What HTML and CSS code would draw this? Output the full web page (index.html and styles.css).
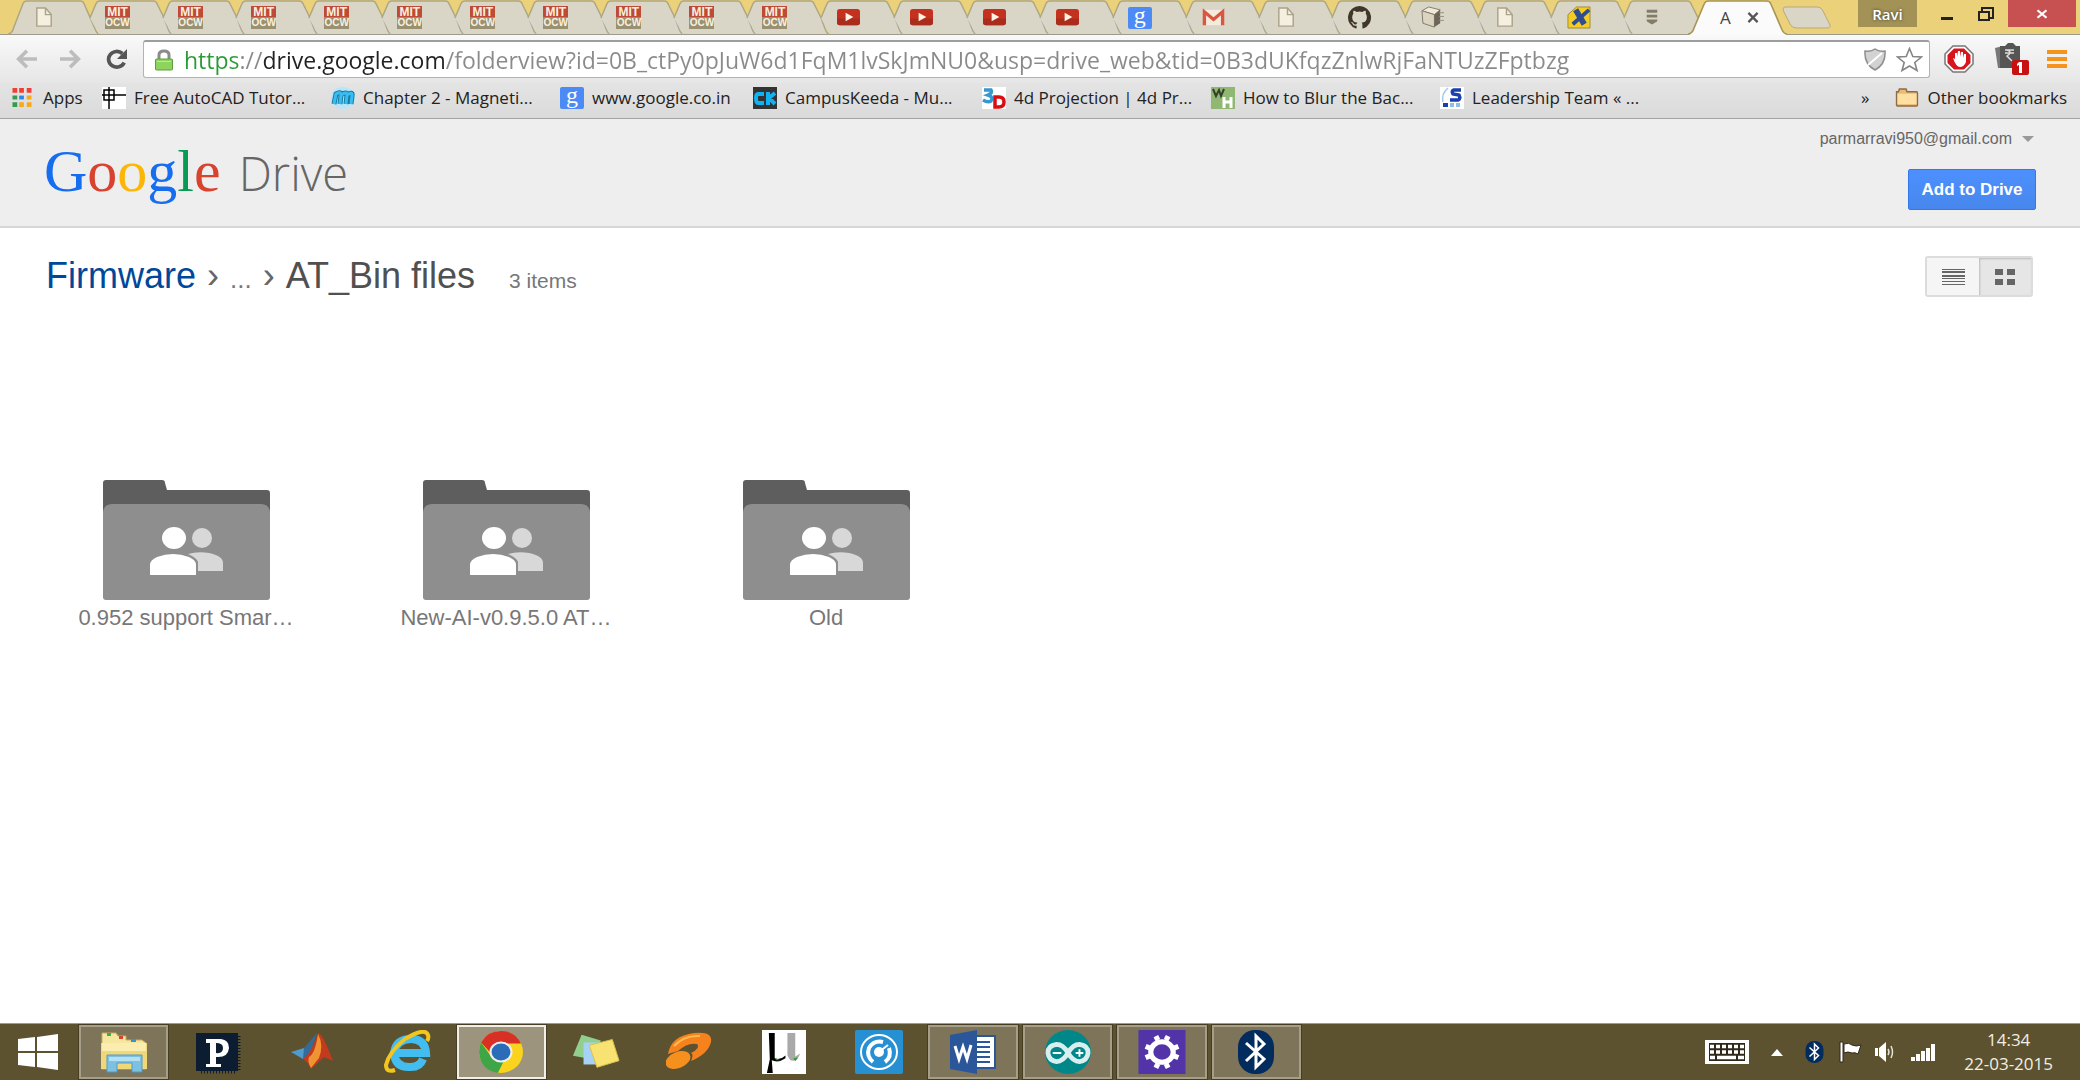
FILE: index.html
```html
<!DOCTYPE html>
<html lang="en">
<head>
<meta charset="utf-8">
<title>AT_Bin files - Google Drive</title>
<link rel="stylesheet" href="styles.css">
</head>
<body>
<svg class="defs" aria-hidden="true">
  <symbol id="tab" viewBox="0 0 92 35" preserveAspectRatio="none"><path fill="#d9d6c8" d="M9 18L15 4Q16 1 19 1H73Q76 1 77 4L91 34H18Z"/><path fill="none" stroke="#aea682" stroke-width="1.5" d="M9 18L15 4Q16 1 19 1H73Q76 1 77 4L84 18"/><path fill="none" stroke="#aaa899" stroke-width="1.5" d="M84 18L88 29Q90 34 92 34"/></symbol>
  <symbol id="tab-first" viewBox="0 0 92 35" preserveAspectRatio="none"><path fill="#d9d6c8" stroke="#aea682" stroke-width="1.5" d="M0 34Q4 34 6 27L15 4Q16 1 19 1H73Q76 1 77 4L88 29Q90 34 92 34"/></symbol>
  <symbol id="tab-active" viewBox="0 0 92 35" preserveAspectRatio="none"><path fill="#fbfbfb" d="M0 35Q4 34 6 27L15 4Q16 1 19 1H73Q76 1 77 4L87 29Q89 34 92 35Z"/><path fill="none" stroke="#a99556" stroke-width="1.5" d="M0 34Q4 34 6 27L15 4Q16 1 19 1H73Q76 1 77 4L87 29Q89 34 92 34"/></symbol>
  <symbol id="page" viewBox="0 0 24 24"><path fill="#f4efdf" stroke="#aaa28a" stroke-width="1.5" d="M4 2H13L19 9V21H4Z"/><path fill="none" stroke="#aaa28a" stroke-width="1.5" d="M13 2V9H19"/></symbol>
  <symbol id="yt" viewBox="0 0 24 24"><rect y="3" width="24" height="17" rx="3" fill="#c4321f"/><path d="M0 13H24V17Q24 20 21 20H3Q0 20 0 17Z" fill="#a92c1c"/><path fill="#fff4e4" d="M9 7L17 11.500L9 16Z"/></symbol>
  <symbol id="bt" viewBox="0 0 36 44"><rect width="36" height="44" rx="17" fill="#032c5e"/><path fill="none" stroke="#fff" stroke-width="3" d="M8 13L26 29L18 37V6L26 14L8 31"/></symbol>
  <symbol id="folder" viewBox="0 0 167 120"><path fill="#5e5e5e" d="M0 34V3Q0 0 3 0H59Q62 0 62 3L64 10H164Q167 10 167 13V34Z"/><path fill="#8e8e8e" d="M0 32Q1 24 9 24H158Q166 24 167 32V117Q167 120 164 120H3Q0 120 0 117Z"/><circle cx="99" cy="58" r="10" fill="#d8d8d8"/><path fill="#d8d8d8" d="M85 74Q95 71 106 73Q120 76 120 83V91H95V82Q94 78 85 74Z"/><ellipse cx="71" cy="58" rx="12" ry="11" fill="#fff"/><path fill="#fff" d="M47 95V85Q47 80 54 77Q70 71 86 77Q93 80 93 85V95Z"/></symbol>
</svg>

<header class="chrome">
  <div class="titlebar">
    <nav class="tabs" aria-label="Open tabs">
      <button class="tab" aria-label="Page"><svg class="shape"><use href="#tab-first"/></svg><svg class="fav"><use href="#page"/></svg></button>
      <button class="tab"><svg class="shape"><use href="#tab"/></svg><span class="fav mit"><b>MIT</b><b>OCW</b></span></button>
      <button class="tab"><svg class="shape"><use href="#tab"/></svg><span class="fav mit"><b>MIT</b><b>OCW</b></span></button>
      <button class="tab"><svg class="shape"><use href="#tab"/></svg><span class="fav mit"><b>MIT</b><b>OCW</b></span></button>
      <button class="tab"><svg class="shape"><use href="#tab"/></svg><span class="fav mit"><b>MIT</b><b>OCW</b></span></button>
      <button class="tab"><svg class="shape"><use href="#tab"/></svg><span class="fav mit"><b>MIT</b><b>OCW</b></span></button>
      <button class="tab"><svg class="shape"><use href="#tab"/></svg><span class="fav mit"><b>MIT</b><b>OCW</b></span></button>
      <button class="tab"><svg class="shape"><use href="#tab"/></svg><span class="fav mit"><b>MIT</b><b>OCW</b></span></button>
      <button class="tab"><svg class="shape"><use href="#tab"/></svg><span class="fav mit"><b>MIT</b><b>OCW</b></span></button>
      <button class="tab"><svg class="shape"><use href="#tab"/></svg><span class="fav mit"><b>MIT</b><b>OCW</b></span></button>
      <button class="tab"><svg class="shape"><use href="#tab"/></svg><span class="fav mit"><b>MIT</b><b>OCW</b></span></button>
      <button class="tab" aria-label="Video"><svg class="shape"><use href="#tab"/></svg><svg class="fav"><use href="#yt"/></svg></button>
      <button class="tab" aria-label="Video"><svg class="shape"><use href="#tab"/></svg><svg class="fav"><use href="#yt"/></svg></button>
      <button class="tab" aria-label="Video"><svg class="shape"><use href="#tab"/></svg><svg class="fav"><use href="#yt"/></svg></button>
      <button class="tab" aria-label="Video"><svg class="shape"><use href="#tab"/></svg><svg class="fav"><use href="#yt"/></svg></button>
      <button class="tab"><svg class="shape"><use href="#tab"/></svg><span class="fav gicon">g</span></button>
      <button class="tab" aria-label="Mail"><svg class="shape"><use href="#tab"/></svg><svg class="fav" viewBox="0 0 24 24"><path fill="#f3ecdc" d="M1 4H23V20H1Z"/><path fill="none" stroke="#dc5540" stroke-width="3.500" d="M2.500 20V6L12 14L21.500 6V20"/></svg></button>
      <button class="tab" aria-label="Page"><svg class="shape"><use href="#tab"/></svg><svg class="fav"><use href="#page"/></svg></button>
      <button class="tab" aria-label="GitHub"><svg class="shape"><use href="#tab"/></svg><svg class="fav" viewBox="0 0 16 16"><path fill="#40372a" d="M8 0a8 8 0 0 0-2.530 15.590c.4.070.55-.17.55-.38v-1.490c-2.010.37-2.530-.49-2.690-.94-.09-.23-.48-.94-.82-1.130-.28-.15-.68-.52-.01-.53.63-.01 1.080.58 1.230.82.72 1.210 1.870.87 2.330.66.07-.52.28-.87.51-1.070-1.780-.2-3.640-.89-3.640-3.950 0-.87.31-1.590.82-2.150-.08-.2-.36-1.020.08-2.120 0 0 .67-.21 2.200.82a7.400 7.400 0 0 1 4 0c1.530-1.040 2.200-.82 2.200-.82.44 1.100.16 1.920.08 2.120.51.56.82 1.270.82 2.150 0 3.070-1.870 3.750-3.650 3.950.29.25.54.73.54 1.480v2.200c0 .21.15.46.55.38A8 8 0 0 0 8 0"/></svg></button>
      <button class="tab" aria-label="Box"><svg class="shape"><use href="#tab"/></svg><svg class="fav" viewBox="0 0 24 24"><path fill="#f0e9d8" stroke="#81796a" d="M1 5L8 1L20 4L14 9Z"/><path fill="#dcd3c0" stroke="#81796a" d="M1 5L14 9V22L2 18Z"/><path fill="#6d6557" d="M14 9L20 4V18L14 22Z"/><path stroke="#9a917e" d="M19 7H24M19 11H24M19 15H24"/></svg></button>
      <button class="tab" aria-label="Page"><svg class="shape"><use href="#tab"/></svg><svg class="fav"><use href="#page"/></svg></button>
      <button class="tab" aria-label="X"><svg class="shape"><use href="#tab"/></svg><svg class="fav" viewBox="0 0 24 24"><path fill="#f4cd22" stroke="#9d8a33" d="M1 9L10 1H24V23H1Z"/><path fill="none" stroke="#2f4d8f" stroke-width="6" d="M9 4L18 19"/><path fill="none" stroke="#2f4d8f" stroke-width="4" d="M23 4L6 19"/></svg></button>
      <button class="tab" aria-label="List"><svg class="shape"><use href="#tab"/></svg><svg class="fav" viewBox="0 0 24 24"><path fill="#827c68" d="M7 4H18V7H7ZM7 9H18V12H7ZM7 14H18V16L13 19H12L7 16Z"/></svg></button>
      <button class="tab tab-on"><svg class="shape"><use href="#tab-active"/></svg><span class="tab-title">A</span><svg class="tab-close" viewBox="0 0 12 12"><path stroke="#555" stroke-width="2.500" d="M1 1L11 11M11 1L1 11"/></svg></button>
    </nav>
    <div class="window">
      <button class="newtab" aria-label="New tab"><svg viewBox="0 0 50 24"><path fill="#d9d6c8" stroke="#b8a976" d="M3 1H36Q39 1 41 5L48 19Q49 22 45 22H14Q10 22 8 18L1 4Q1 1 3 1Z"/></svg></button>
      <button class="profile">Ravi</button>
      <button class="win" aria-label="Minimize"><svg viewBox="0 0 16 16"><path fill="#222" d="M2 11H14V14H2Z"/></svg></button>
      <button class="win" aria-label="Restore"><svg viewBox="0 0 16 16"><path fill="none" stroke="#222" stroke-width="2" d="M1 6H11V14H1ZM4 6V2H15V12H11"/></svg></button>
      <button class="win close" aria-label="Close"><svg viewBox="0 0 16 16"><path stroke="#fff" stroke-width="3" d="M2 3L14 13M14 3L2 13"/></svg></button>
    </div>
  </div>
  <div class="toolbar">
    <button class="tool" aria-label="Back"><svg viewBox="0 0 24 24"><path fill="none" stroke="#bdbdbd" stroke-width="4" d="M13 3L4 12L13 21M4 12H24"/></svg></button>
    <button class="tool" aria-label="Forward"><svg viewBox="0 0 24 24"><path fill="none" stroke="#bdbdbd" stroke-width="4" d="M11 3L20 12L11 21M20 12H0"/></svg></button>
    <button class="tool" aria-label="Reload"><svg viewBox="0 0 24 24"><path fill="none" stroke="#555" stroke-width="4" d="M19 6A9 8.500 0 1 0 21 16"/><path fill="#555" d="M24 1V12H13Z"/></svg></button>
    <div class="omnibox">
      <svg class="lock" viewBox="0 0 18 22"><path fill="none" stroke="#8b8b8b" stroke-width="3" d="M4 11V6Q4 2 9 2Q14 2 14 6V11"/><rect x=".5" y="10" width="17" height="11" rx="1" fill="#8ed35e" stroke="#5c9e3c"/><path stroke="#b9eb96" d="M2 12.500H16"/></svg>
      <input class="url" type="text" aria-label="Address" value="https://drive.google.com/folderview?id=0B_ctPy0pJuW6d1FqM1lvSkJmNU0&amp;usp=drive_web&amp;tid=0B3dUKfqzZnlwRjFaNTUzZFptbzg">
      <svg class="shield" viewBox="0 0 22 23"><path fill="#d2d2d2" stroke="#8e8e8e" stroke-width="1.500" d="M11 1Q15 4 21 3Q22 16 11 22Q0 16 1 3Q7 4 11 1Z"/><path stroke="#fff" stroke-width="2" d="M4 17L18 5"/></svg>
      <svg class="star" viewBox="0 0 27 25"><path fill="#fff" stroke="#858585" stroke-width="1.600" d="M13.500 1.500L16.800 9.500L25.500 10L18.800 15.500L21 23.500L13.500 19L6 23.500L8.200 15.500L1.500 10L10.200 9.500Z"/></svg>
    </div>
    <button class="ext" aria-label="Ad blocker"><svg viewBox="0 0 30 28"><path fill="#fff" stroke="#777" stroke-width="1.500" d="M9 1H21L29 9V19L21 27H9L1 19V9Z"/><path fill="#d8141c" d="M10 3.500H20L26.500 10V18L20 24.500H10L3.500 18V10Z"/><path fill="#fff" d="M9 13L11 14V8H13V12L14 6H16V12L17 7H19V13L20 9H22V17Q20 22 16 22Q12 22 9 13Z"/></svg></button>
    <button class="ext" aria-label="Price alerts"><svg viewBox="0 0 36 34"><path fill="#777" d="M1 6L9 4L13 26L4 26Z"/><path fill="#555" d="M6 4H11L14 1H19L22 4H26V26H6Z"/><path fill="none" stroke="#ddd" stroke-width="1.500" d="M11 8H20M11 11H20M13 8Q19 10 13 14L18 19"/><rect x="18" y="18" width="17" height="15" rx="2" fill="#c80f12"/><path fill="#fff" d="M25 20H28V31H25V23L23 24V22Z"/></svg></button>
    <button class="ext menu" aria-label="Menu"><svg viewBox="0 0 20 20"><path fill="#f5931c" d="M0 1H20V5H0ZM0 8H20V12H0ZM0 15H20V19H0Z"/></svg></button>
  </div>
  <nav class="bookmarks" aria-label="Bookmarks">
    <a class="apps" href="#"><svg viewBox="0 0 20 20"><path fill="#ee4036" d="M0 0H5V5H0ZM7 0H12V5H7ZM15 0H20V5H15Z"/><path fill="#359b50" d="M0 8H5V12H0ZM0 15H5V20H0Z"/><path fill="#2f86e8" d="M7 8H12V12H7Z"/><path fill="#f8a91a" d="M15 8H20V12H15ZM7 15H12V20H7ZM15 15H20V20H15Z"/></svg>Apps</a>
    <a href="#"><svg viewBox="0 0 24 22"><path fill="#fff" d="M0 0H24V22H0Z"/><path fill="none" stroke="#000" stroke-width="1.500" d="M0 8H24M7 0V22M2 3H12V13H2Z"/></svg>Free AutoCAD Tutor...</a>
    <a href="#"><svg viewBox="0 0 24 22"><ellipse cx="12" cy="11" rx="12" ry="11" fill="#b9e5f8"/><path fill="none" stroke="#167ba5" stroke-width="5" d="M3 17L5 7Q10 4 10 8L9 17M10 8Q16 4 16 8L15 17M16 8Q22 4 21 9L20 17"/><path fill="none" stroke="#39bdf0" stroke-width="3" d="M3 17L5 7Q10 4 10 8L9 17M10 8Q16 4 16 8L15 17M16 8Q22 4 21 9L20 17"/></svg>Chapter 2 - Magneti...</a>
    <a class="short" href="#"><span class="gicon">g</span>www.google.co.in</a>
    <a href="#"><svg viewBox="0 0 24 22"><path fill="#333" d="M0 0H24V22H0Z"/><path fill="none" stroke="#10b2f4" stroke-width="4" d="M11 7H5Q3 7 3 11Q3 16 5 16H11M15 5V18M22 6L16 11L22 17"/></svg>CampusKeeda - Mu...</a>
    <a href="#"><svg viewBox="0 0 24 22"><path fill="#fff" d="M0 0H24V22H0Z"/><path fill="none" stroke="#3499cf" stroke-width="3.500" d="M2 3H9Q11 6 6 8Q12 10 9 14Q6 16 1 13"/><path fill="none" stroke="#d90d12" stroke-width="3.500" d="M13 10V20H17Q22 20 22 15Q22 10 17 10Z"/></svg>4d Projection | 4d Pr...</a>
    <a href="#"><svg viewBox="0 0 24 22"><path fill="#91b873" d="M0 0H24V22H0Z"/><path fill="none" stroke="#35402b" stroke-width="2" d="M2 2L5 9L8 3L10 9L13 2"/><path fill="none" stroke="#fff" stroke-width="3" d="M13 10V21M20 10V21M13 15H20"/></svg>How to Blur the Bac...</a>
    <a href="#"><svg viewBox="0 0 24 22"><path fill="#fff" d="M0 0H24V22H0Z"/><path fill="none" stroke="#9dcbea" stroke-width="1.500" d="M8 1Q1 7 3 15"/><path fill="none" stroke="#1b3fae" stroke-width="3.500" d="M21 3H14Q11 4 13 7L19 8Q21 12 18 13H10"/><path fill="#1b3fae" d="M3 16H8V20H3Z"/><path fill="#8fbfe6" d="M10 16H14V20H10ZM16 16H20V20H16Z"/></svg>Leadership Team « ...</a>
    <button class="more" aria-label="More bookmarks">»</button>
    <a class="other" href="#"><svg viewBox="0 0 24 20"><path fill="#e9bb74" stroke="#8d6b45" stroke-width="1.500" d="M1 4V18Q1 19 2 19H22Q23 19 23 18V5Q23 4 22 4H12L11 1H4L3 4Z"/><path fill="#ffdfa2" d="M2 6H22V17H2Z"/></svg>Other bookmarks</a>
  </nav>
</header>

<div class="drivebar">
  <div class="logo"><span class="google"><i class="b">G</i><i class="r">o</i><i class="y">o</i><i class="b">g</i><i class="gr">l</i><i class="r">e</i></span><span class="drive">Drive</span></div>
  <div class="account">
    <button class="email">parmarravi950@gmail.com<svg viewBox="0 0 12 6"><path fill="#999" d="M0 0H12L6 6Z"/></svg></button>
    <button class="add">Add to Drive</button>
  </div>
</div>

<main>
  <div class="heading">
    <nav class="crumbs" aria-label="Folder path"><a href="#">Firmware</a><span class="sep">›</span><span class="dots">...</span><span class="sep">›</span><h1>AT_Bin files</h1><span class="count">3 items</span></nav>
    <div class="views">
      <button aria-label="List view"><svg viewBox="0 0 23 16"><path fill="#666" d="M0 0H23V1H0ZM0 2H23V4H0ZM0 6H23V8H0ZM0 9H23V10H0ZM0 12H23V13H0ZM0 15H23V16H0Z"/></svg></button>
      <button class="on" aria-label="Grid view"><svg viewBox="0 0 20 16"><path fill="#666" d="M0 0H8V6H0ZM12 0H20V6H12ZM0 10H8V16H0ZM12 10H20V16H12Z"/></svg></button>
    </div>
  </div>
  <div class="grid">
    <a href="#"><svg><use href="#folder"/></svg>0.952 support Smar…</a>
    <a href="#"><svg><use href="#folder"/></svg>New-AI-v0.9.5.0 AT…</a>
    <a href="#"><svg><use href="#folder"/></svg>Old</a>
  </div>
</main>

<footer class="taskbar">
  <button class="start" aria-label="Start"><svg viewBox="0 0 40 36"><path fill="#fff" d="M0 5L17 3V17H0ZM19 3L40 0V17H19ZM0 19H17V33L0 31ZM19 19H40V36L19 33Z"/></svg></button>
  <div class="tasks">
    <button class="run" aria-label="File Explorer"><svg viewBox="0 0 48 42"><path fill="#f5e6a0" stroke="#c9ad5a" d="M2 6V2H16L18 5H26V9H42L46 12V38H2Z"/><path fill="#3fae49" d="M7 2H11V5H7Z"/><path fill="#d8422f" d="M19 5H23V8H19Z"/><path fill="#2f93dd" d="M31 8H36V11H31Z"/><path fill="#f0d878" d="M1 12H47V38H1Z"/><path fill="#fbedb0" d="M2 12H46V20H2Z"/><path fill="#7cc0e2" stroke="#4f9cc8" d="M7 24H42V41H32V32H17V41H7Z"/><path fill="#b5e0f3" d="M9 26H40V30H9Z"/></svg></button>
    <button aria-label="Processing"><svg viewBox="0 0 48 44"><path fill="#0d1d31" d="M2 3H44V41H2Z"/><path stroke="#0d1d31" stroke-width="3" stroke-dasharray="1 2" d="M7 42H42M45 6V40"/><path fill="#fff" d="M12 9H27Q35 10 35 18Q34 28 22 27V34H27V37H12V34H16V13H12ZM22 13V23Q29 24 29 18Q29 13 22 13Z"/></svg></button>
    <button aria-label="MATLAB"><svg viewBox="0 0 48 44"><path fill="#4e9bd0" d="M3 22L16 18L22 22L15 29Z"/><path fill="#326c9c" d="M16 18L29 3L22 24L15 29Z"/><path fill="#c33a1c" d="M15 29Q22 25 30 3Q34 2 45 31L36 27L23 39Q20 32 15 29Z"/><path fill="#f09332" d="M30 4Q36 15 31 28L23 38Q19 31 21 27Q27 24 30 4Z"/></svg></button>
    <button aria-label="Internet Explorer"><svg viewBox="0 0 48 44"><path fill="none" stroke="#43bdf0" stroke-width="8" d="M11 23H43Q42 9 28 9Q13 9 11 23Q12 38 28 37Q37 37 40 29"/><path fill="none" stroke="#f3c51f" stroke-width="4" d="M12 40Q3 43 3 35Q6 22 22 9Q42 -3 45 5Q46 8 44 11"/></svg></button>
    <button class="run active" aria-label="Chrome"><svg viewBox="0 0 44 42"><ellipse cx="22" cy="21" rx="21" ry="20" fill="#fad31c"/><path fill="#d93025" d="M3 12Q9 1 22 1Q36 1 41 13H22L13 23Z"/><path fill="#3fa648" d="M3 12L13 26L24 31L19 41Q2 38 1 21Q1 16 3 12Z"/><ellipse cx="22" cy="21" rx="10" ry="9" fill="#2a6cb8" stroke="#eee" stroke-width="2"/></svg></button>
    <button aria-label="Sticky Notes"><svg viewBox="0 0 50 40"><path fill="#92cf8d" d="M10 2L30 8L24 28L1 24Z"/><path fill="#a6d2f5" d="M12 10H30V33H12Z"/><path fill="#f8e272" stroke="#d9bf4c" d="M18 13L42 7L49 29L26 36Z"/></svg></button>
    <button aria-label="UC Browser"><svg viewBox="0 0 48 42"><path fill="#f5821d" d="M2 23Q5 5 28 2Q47 0 45 11Q42 23 25 30Q28 23 25 22Q35 17 31 13Q22 11 12 20Z"/><ellipse cx="12" cy="29" rx="13" ry="8" transform="rotate(-22 12 29)" fill="#f5901f"/><path fill="none" stroke="#ffba4e" stroke-width="2" d="M8 15Q18 4 34 5"/></svg></button>
    <button aria-label="muTorrent"><svg viewBox="0 0 45 45"><path fill="#fff" d="M0 0H45V45H0Z"/><path fill="#000" d="M7 3H13V29Q19 31 24 26V29Q17 34 10 31L11 44H5L8 30Z"/><path fill="#a9a9a9" d="M26 3H34V27L39 24Q36 33 29 31L26 26Z"/><path fill="#2e9c34" d="M14 29L19 31H14ZM32 29L37 28L34 32Z"/></svg></button>
    <button aria-label="Speed monitor"><svg viewBox="0 0 48 44"><rect width="48" height="44" rx="2" fill="#2790d2"/><ellipse cx="24" cy="22" rx="18" ry="17" fill="none" stroke="#fff" stroke-width="2"/><path fill="none" stroke="#fff" stroke-width="4" d="M18 32Q11 26 14 18Q19 10 28 12M34 18Q37 27 30 32"/><circle cx="24" cy="22" r="5" fill="#fff"/><path stroke="#fff" stroke-width="2" d="M24 22L33 15"/></svg></button>
    <button class="run" aria-label="Word"><svg viewBox="0 0 46 44"><path fill="#fff" stroke="#2b579a" stroke-width="2" d="M26 6H45V38H26Z"/><path stroke="#2b579a" stroke-width="2" d="M27 12H40M27 17H40M27 22H40M27 27H40M27 32H40"/><path fill="#2b579a" d="M0 5L27 0V44L0 39Z"/><path fill="none" stroke="#fff" stroke-width="3" d="M5 16L9 29L13 17L17 29L21 15"/></svg></button>
    <button class="run" aria-label="Arduino"><svg viewBox="0 0 50 46"><ellipse cx="25" cy="23" rx="24" ry="23" fill="#00878a"/><path fill="none" stroke="#d9eeee" stroke-width="5" d="M25 24Q20 15 13 15Q4 16 4 24Q5 32 13 33Q20 33 25 24Q30 15 37 15Q46 16 46 24Q45 32 37 33Q30 33 25 24Z"/><path stroke="#fff" stroke-width="2" d="M9 24H18M33 24H41M37 20V28"/></svg></button>
    <button class="run" aria-label="Settings"><svg viewBox="0 0 46 43"><path fill="#5333a8" d="M0 0H46V43H0Z"/><ellipse cx="23" cy="21.500" rx="11" ry="10" fill="none" stroke="#fff" stroke-width="5"/><path stroke="#fff" stroke-width="5" d="M19 10L17 6M27 10L29 6M19 33L17 37M27 33L29 37M12 18L7 16M12 25L7 27M34 18L39 16M34 25L39 27"/></svg></button>
    <button class="run" aria-label="Bluetooth"><svg><use href="#bt"/></svg></button>
  </div>
  <div class="tray">
    <button aria-label="Keyboard"><svg class="kb" viewBox="0 0 46 26"><rect x="1" y="1" width="44" height="24" fill="#fff"/><path fill="#30291a" d="M5 4H41V22H5Z"/><path fill="none" stroke="#fff" stroke-width="3.500" stroke-dasharray="4 2" d="M6 7.500H40M6 13H40"/><path stroke="#fff" stroke-width="3.500" d="M6 18.500H11M13 18.500H32M34 18.500H40"/></svg></button>
    <button aria-label="Show hidden icons"><svg class="up" viewBox="0 0 12 7"><path fill="#fff" d="M0 7L6 0L12 7Z"/></svg></button>
    <button aria-label="Bluetooth"><svg class="tbt"><use href="#bt"/></svg></button>
    <button aria-label="Action center"><svg class="flag" viewBox="0 0 24 22"><path fill="#fff" stroke="#30291a" d="M1 1H4V21H1ZM5 3Q10 1 13 4Q17 6 22 4L19 13Q16 11 13 12Q9 10 5 12Z"/></svg></button>
    <button aria-label="Volume"><svg class="vol" viewBox="0 0 22 22"><path fill="#fff" d="M0 7H3V15H0ZM4 7L11 1V21L4 15Z"/><path fill="none" stroke="#e5e1d4" stroke-width="1.500" d="M13 8Q15 11 13 14M16 5Q19 11 16 17"/></svg></button>
    <button aria-label="Network"><svg class="net" viewBox="0 0 24 18"><path fill="#fff" d="M0 14H4V18H0ZM5 11H9V18H5ZM10 8H14V18H10ZM15 5H19V18H15ZM20 1H24V18H20Z"/></svg></button>
    <button class="clock"><time>14:34<br>22-03-2015</time></button>
  </div>
</footer>
</body>
</html>
```
FILE: styles.css
```css
* { box-sizing: border-box; }
body {
  margin: 0;
  min-height: 100vh;
  display: flex;
  flex-direction: column;
  background: #fff;
  font-family: "Liberation Sans", Arial, sans-serif;
}
button { margin: 0; padding: 0; border: 0; background: none; font: inherit; color: inherit; }
a { text-decoration: none; color: inherit; }
svg { display: block; flex: none; }
.defs { position: absolute; width: 0; height: 0; }

/* browser window */
.chrome { font-family: "Open Sans", "Noto Sans", sans-serif; }
.titlebar { display: flex; height: 35px; background: #ebd27a; border-bottom: 1px solid #9c9a8c; }
.tabs { flex: 1; display: flex; padding-left: 17px; }
.tab { position: relative; flex: 1 1 0; min-width: 0; height: 35px; padding-left: 15px; display: flex; align-items: center; }
.shape { position: absolute; top: 0; left: -9px; width: calc(100% + 18px); height: 35px; }
.fav { position: relative; width: 25px; height: 23px; }
.mit { display: flex; flex-direction: column; background: #9a9072; color: #f9f1df; font-family: "Liberation Sans", sans-serif; font-size: 10px; line-height: 12px; text-align: center; }
.mit b:first-child { height: 11px; background: #bf4a38; font-size: 12px; line-height: 12px; }
.gicon { display: block; width: 24px; height: 22px; border-radius: 2px; background: #4c8bf5; color: #fff; font-family: "Liberation Serif", serif; font-size: 24px; line-height: 16px; text-align: center; }
.tab-on { padding-left: 23px; gap: 16px; z-index: 1; }
.tab-title { position: relative; font-size: 17px; color: #444; }
.tab-close { position: relative; width: 12px; height: 11px; }
.window { width: 302px; padding-right: 4px; display: flex; align-items: flex-start; }
.newtab { margin: 6px auto 0 4px; }
.newtab svg { width: 50px; height: 24px; }
.profile { width: 59px; height: 27px; margin-right: 10px; background: #a39256; color: #fff; font-size: 15px; font-weight: 600; line-height: 24px; text-shadow: 0 0 3px #333; }
.win { width: 39px; height: 27px; display: flex; align-items: center; justify-content: center; }
.win svg { width: 16px; height: 16px; }
.close { width: 68px; margin-left: 3px; background: #c75050; }
.close svg { width: 14px; height: 12px; }

.toolbar { display: flex; align-items: center; height: 48px; padding: 0 13px 0 14px; background: linear-gradient(#f9f9f9, #e6e6e6); }
.tool { width: 24px; margin-right: 21px; }
.tool svg { width: 24px; height: 22px; }
.tool:nth-child(3) { margin-right: 15px; }
.omnibox { flex: 1; display: flex; align-items: center; height: 38px; padding: 0 6px 0 11px; background: #fff; border: 1px solid #b3b3b3; border-top: 2px solid #9d9d9d; border-radius: 3px; }
.lock { width: 18px; height: 22px; margin-right: 11px; }
.url {
  flex: 1; min-width: 0; height: 34px; padding: 0; border: 0; outline: 0;
  font-family: "Open Sans", "Noto Sans", sans-serif; font-size: 23px; color: transparent;
  background: linear-gradient(90deg, #2a9a35 55px, #888 55px 78px, #222 78px 262px, #8a8a8a 262px);
  -webkit-background-clip: text; background-clip: text;
}
.shield { width: 22px; height: 23px; margin-right: 10px; }
.star { width: 27px; height: 25px; }
.ext { margin-left: 14px; }
.ext svg { width: 30px; height: 28px; }
.ext:nth-last-child(2) { margin-left: 20px; }
.ext:nth-last-child(2) svg { width: 36px; height: 34px; }
.menu { margin-left: 17px; }
.menu svg { width: 20px; height: 20px; }

.bookmarks { display: flex; align-items: center; gap: 20px; height: 36px; padding: 0 13px 6px 12px; background: linear-gradient(#e4e4e4, #dadada); border-bottom: 1px solid #a3a3a3; font-size: 17px; line-height: 24px; color: #222; white-space: nowrap; }
.bookmarks a { display: flex; align-items: center; gap: 8px; width: 209px; }
.bookmarks svg { width: 24px; height: 22px; }
.bookmarks .apps { width: 70px; gap: 11px; }
.bookmarks .apps svg { width: 20px; height: 19px; }
.bookmarks .short { width: 173px; }
.more { margin-left: auto; }
.bookmarks .other { width: auto; padding-left: 6px; }
.other svg { height: 19px; }

/* drive page */
.drivebar { display: flex; justify-content: space-between; height: 109px; padding: 0 44px; background: #eee; border-bottom: 2px solid #d6d6d6; }
.logo { display: flex; align-items: baseline; gap: 18px; padding-top: 14px; line-height: 76px; }
.google { font-family: "Liberation Serif", serif; font-size: 60px; }
.google i { font-style: normal; }
.b { color: #176df0; }
.r { color: #d8432f; }
.y { color: #fcb605; }
.gr { color: #069a55; }
.drive { font-family: "Open Sans", sans-serif; font-weight: 300; font-size: 47px; color: #666; }
.account { display: flex; flex-direction: column; align-items: flex-end; padding-top: 10px; }
.email { display: flex; align-items: center; gap: 10px; margin-right: 2px; font-size: 16px; line-height: 20px; color: #666; }
.email svg { width: 12px; height: 6px; }
.add { width: 128px; height: 41px; margin-top: 20px; border: 1px solid #3079ed; border-radius: 2px; background: linear-gradient(#4d90fe, #4787ed); color: #fff; font-size: 17px; font-weight: 700; }

main { flex: 1; }
.heading { display: flex; justify-content: space-between; align-items: flex-start; padding: 28px 47px 0 46px; }
.crumbs { display: flex; align-items: baseline; font-size: 36px; line-height: 40px; }
.crumbs a { color: #00489a; }
.sep { margin: 0 11px; font-size: 36px; color: #666; }
.dots { font-size: 26px; color: #777; }
h1 { margin: 0; font-size: 36px; font-weight: 400; color: #505050; }
.count { margin-left: 34px; font-size: 21px; color: #777; }
.views { display: flex; border: 2px solid #dcdcdc; border-radius: 3px; }
.views button { width: 52px; height: 37px; display: flex; align-items: center; justify-content: center; background: #f5f5f5; }
.views button:first-child svg { width: 23px; height: 16px; }
.views .on { background: #e6e6e6; box-shadow: inset 1px 1px 2px #bbb; }
.on svg { width: 20px; height: 16px; }
.grid { display: flex; flex-wrap: wrap; padding: 179px 26px 0; }
.grid a { width: 320px; display: flex; flex-direction: column; align-items: center; gap: 5px; font-size: 22px; line-height: 26px; color: #777; }
.grid svg { width: 167px; height: 120px; }

/* desktop taskbar */
.taskbar { display: flex; align-items: center; height: 57px; padding-right: 27px; background: #5c5230; border-top: 1px solid #a19c86; color: #f1eee3; font-family: "Open Sans", "Noto Sans", sans-serif; }
.start { width: 79px; padding-left: 18px; }
.start svg { width: 40px; height: 36px; }
.tasks { flex: 0 1 1222px; display: grid; grid-template-columns: repeat(13, 1fr); gap: 5px; }
.tasks button { height: 54px; display: flex; align-items: center; justify-content: center; }
.tasks svg { width: 48px; height: 44px; }
.tasks button:last-child svg { width: 36px; }
.tasks .run { background: #7d7459; border: 2px solid #a59e88; outline: 1px solid #463d22; }
.tasks .active { background: #9c947d; border-color: #f1efe8; }
.tray { display: flex; align-items: center; margin-left: auto; }
.kb { width: 46px; height: 26px; margin-right: 21px; }
.up { width: 12px; height: 7px; margin-right: 22px; }
.tbt { width: 19px; height: 22px; margin-right: 15px; }
.flag { width: 24px; height: 22px; margin-right: 12px; }
.vol { width: 22px; height: 22px; margin-right: 14px; }
.net { width: 24px; height: 18px; margin-right: 29px; }
.clock { font-size: 17px; line-height: 24px; text-align: center; }
```
